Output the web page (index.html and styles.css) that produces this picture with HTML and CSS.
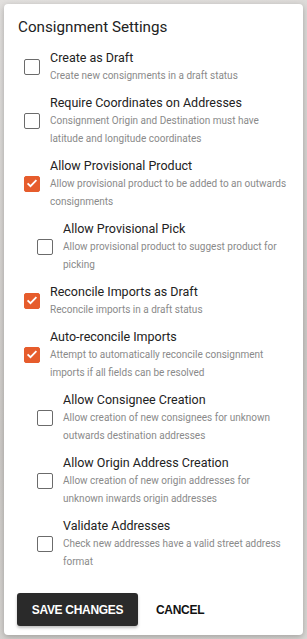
FILE: index.html
```html
<!DOCTYPE html>
<html lang="en">
<head>
  <meta charset="UTF-8">
  <meta name="viewport" content="width=device-width, initial-scale=1.0">
  <title>Consignment Settings</title>
  <link rel="stylesheet" href="styles.css">
</head>
<body>
  <div class="card">
    <h1>Consignment Settings</h1>

    <div class="option">
      <span class="box"></span>
      <div class="text">
        <div class="label">Create as Draft</div>
        <div class="desc">Create new consignments in a draft status</div>
      </div>
    </div>

    <div class="option">
      <span class="box"></span>
      <div class="text">
        <div class="label">Require Coordinates on Addresses</div>
        <div class="desc">Consignment Origin and Destination must have latitude and longitude coordinates</div>
      </div>
    </div>

    <div class="option">
      <span class="box checked"><svg viewBox="0 0 16 16"><path d="M3.6 8.3l2.9 2.9 5.9-6"/></svg></span>
      <div class="text">
        <div class="label">Allow Provisional Product</div>
        <div class="desc">Allow provisional product to be added to an outwards consignments</div>
      </div>
    </div>

    <div class="option sub">
      <span class="box"></span>
      <div class="text">
        <div class="label">Allow Provisional Pick</div>
        <div class="desc">Allow provisional product to suggest product for picking</div>
      </div>
    </div>

    <div class="option">
      <span class="box checked"><svg viewBox="0 0 16 16"><path d="M3.6 8.3l2.9 2.9 5.9-6"/></svg></span>
      <div class="text">
        <div class="label">Reconcile Imports as Draft</div>
        <div class="desc">Reconcile imports in a draft status</div>
      </div>
    </div>

    <div class="option">
      <span class="box checked"><svg viewBox="0 0 16 16"><path d="M3.6 8.3l2.9 2.9 5.9-6"/></svg></span>
      <div class="text">
        <div class="label">Auto-reconcile Imports</div>
        <div class="desc">Attempt to automatically reconcile consignment imports if all fields can be resolved</div>
      </div>
    </div>

    <div class="option sub">
      <span class="box"></span>
      <div class="text">
        <div class="label">Allow Consignee Creation</div>
        <div class="desc">Allow creation of new consignees for unknown outwards destination addresses</div>
      </div>
    </div>

    <div class="option sub">
      <span class="box"></span>
      <div class="text">
        <div class="label">Allow Origin Address Creation</div>
        <div class="desc">Allow creation of new origin addresses for unknown inwards origin addresses</div>
      </div>
    </div>

    <div class="option sub">
      <span class="box"></span>
      <div class="text">
        <div class="label">Validate Addresses</div>
        <div class="desc">Check new addresses have a valid street address format</div>
      </div>
    </div>

    <div class="actions">
      <button class="btn-save">Save Changes</button>
      <button class="btn-cancel">Cancel</button>
    </div>
  </div>
</body>
</html>
```

FILE: styles.css
```css
* {
  margin: 0;
  padding: 0;
  box-sizing: border-box;
}

body {
  background: linear-gradient(160deg, #e2e0de, #cfccc9 60%, #dad8d5);
  font-family: Roboto, 'Noto Sans', sans-serif;
  padding: 4px;
  min-height: 100vh;
}

.card {
  background: white;
  width: 299px;
  border-radius: 4px;
  box-shadow: 0 2px 6px rgba(0, 0, 0, 0.25);
  padding: 12px 14px 9px;
}

h1 {
  font-size: 15.2px;
  font-weight: 400;
  line-height: 22px;
  color: #222;
  margin-bottom: 10px;
}

.option {
  display: flex;
  align-items: center;
  margin-bottom: 8px;
  padding-left: 6px;
}

.option.sub {
  padding-left: 19px;
}

.box {
  flex: none;
  width: 16px;
  height: 16px;
  border: 1.5px solid #6b6b6b;
  border-radius: 2px;
  margin-right: 10px;
}

.box.checked {
  background: #e65c2c;
  border-color: #e65c2c;
}

.box svg {
  display: block;
  width: 16px;
  height: 16px;
  margin: -1.5px;
  fill: none;
  stroke: white;
  stroke-width: 1.8;
}

.label {
  font-size: 12.5px;
  line-height: 19px;
  color: #222;
}

.desc {
  font-size: 10px;
  line-height: 18px;
  color: #8a8a8a;
}

.actions {
  display: flex;
  align-items: center;
  margin-top: 22px;
  margin-left: -1px;
}

button {
  font-family: 'Liberation Sans', Arial, sans-serif;
  font-weight: 700;
  font-size: 12px;
  text-transform: uppercase;
  border: none;
  cursor: pointer;
  letter-spacing: -0.3px;
}

.btn-save {
  background: #2a2a2a;
  color: white;
  height: 33px;
  width: 121px;
  border-radius: 3px;
  box-shadow: 0 2px 3px rgba(0, 0, 0, 0.25);
}

.btn-cancel {
  background: none;
  color: #111;
  margin-left: 18px;
}
```
